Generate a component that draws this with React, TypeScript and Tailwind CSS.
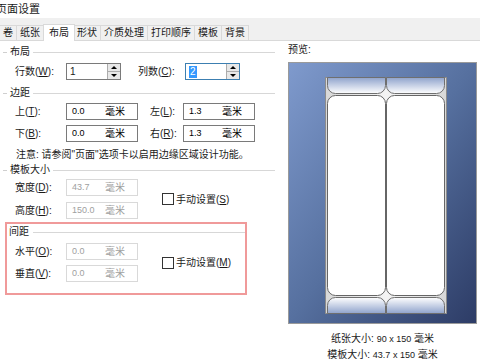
import React from "react";

const FONT = { fontFamily: '"Liberation Sans", "Noto Sans CJK SC", sans-serif' };

const tabs = ["卷", "纸张", "布局", "形状", "介质处理", "打印顺序", "模板", "背景"];

const GroupHeader: React.FC<{ title: string }> = ({ title }) => (
  <div className="flex items-center h-[14px]">
    <div className="ml-[3px] w-[4px] h-px bg-[#cfcfcf]" />
    <span className="px-[3px] leading-[14px]">{title}</span>
    <div className="flex-1 h-px bg-[#d7d7d7]" />
  </div>
);

const Label: React.FC<{ text: string; k: string; w: string }> = ({ text, k, w }) => (
  <div className={`${w} leading-[17px]`}>
    {text}(<u>{k}</u>):
  </div>
);

const UnitInput: React.FC<{ value: string; disabled?: boolean }> = ({ value, disabled }) => (
  <div
    className={`w-[72px] h-[17px] border bg-white flex items-center ${
      disabled ? "border-[#d9d9d9] text-[#a0a0a0]" : "border-[#7a7a7a] text-black"
    }`}
  >
    <span className="pl-[5px] w-[38px] text-[9px]">{value}</span>
    <span>毫米</span>
  </div>
);

const SpinInput: React.FC<{ value: string; focused?: boolean }> = ({ value, focused }) => (
  <div
    className={`w-[55px] h-[17px] border bg-white flex ${
      focused ? "border-[#3c7fb1]" : "border-[#7a7a7a]"
    }`}
  >
    <div className="flex-1 flex items-center pl-[3px] text-[10px]">
      {focused ? <span className="bg-[#3399ff] text-white px-px leading-[12px]">{value}</span> : value}
    </div>
    <div className="w-[13px] flex flex-col border-l border-[#acacac]">
      <div className="flex-1 bg-[#e8e8e8] border-b border-[#acacac] flex items-center justify-center">
        <div className="w-0 h-0 border-l-[3px] border-r-[3px] border-b-[3px] border-l-transparent border-r-transparent border-b-black" />
      </div>
      <div className="flex-1 bg-[#e8e8e8] flex items-center justify-center">
        <div className="w-0 h-0 border-l-[3px] border-r-[3px] border-t-[3px] border-l-transparent border-r-transparent border-t-black" />
      </div>
    </div>
  </div>
);

const Check: React.FC<{ text: string; k: string }> = ({ text, k }) => (
  <div className="flex items-center gap-[2px]">
    <div className="w-[12px] h-[12px] border border-[#333] bg-white" />
    <span>
      {text}(<u>{k}</u>)
    </span>
  </div>
);

const Preview: React.FC = () => (
  <div className="w-[189px] h-[262px] border border-[#9a9a9a] bg-gradient-to-br from-[#7f9acd] via-[#56709f] to-[#2d3c66]">
    <svg width="187" height="260" viewBox="0 0 187 260">
      <defs>
        <linearGradient id="topBand" x1="0" y1="0" x2="0" y2="1">
          <stop offset="0" stopColor="#8fa3cc" />
          <stop offset="1" stopColor="#ffffff" />
        </linearGradient>
        <linearGradient id="botBand" x1="0" y1="0" x2="0" y2="1">
          <stop offset="0" stopColor="#ffffff" />
          <stop offset="1" stopColor="#8fa3cc" />
        </linearGradient>
        <linearGradient id="paper" x1="0" y1="0" x2="1" y2="0">
          <stop offset="0" stopColor="#d8d8d8" />
          <stop offset="0.5" stopColor="#f4f4f4" />
          <stop offset="1" stopColor="#d8d8d8" />
        </linearGradient>
      </defs>
      <rect x="36.5" y="14.5" width="121" height="236" fill="url(#paper)" stroke="#8c8c8c" />
      <path d="M38.5 14.5 V22.5 a8 8 0 0 0 8 8 H88.5 a8 8 0 0 0 8 -8 V14.5 Z" fill="url(#topBand)" stroke="#6f6f6f" />
      <path d="M97.5 14.5 V22.5 a8 8 0 0 0 8 8 H147.5 a8 8 0 0 0 8 -8 V14.5 Z" fill="url(#topBand)" stroke="#6f6f6f" />
      <rect x="38.5" y="32.5" width="58" height="200" rx="8" fill="#ffffff" stroke="#666" />
      <rect x="97.5" y="32.5" width="58" height="200" rx="8" fill="#ffffff" stroke="#666" />
      <path d="M38.5 250.5 V242.5 a8 8 0 0 1 8 -8 H88.5 a8 8 0 0 1 8 8 V250.5 Z" fill="url(#botBand)" stroke="#6f6f6f" />
      <path d="M97.5 250.5 V242.5 a8 8 0 0 1 8 -8 H147.5 a8 8 0 0 1 8 8 V250.5 Z" fill="url(#botBand)" stroke="#6f6f6f" />
    </svg>
  </div>
);

export default function App() {
  return (
    <div className="w-[480px] h-[363px] bg-white overflow-hidden text-[10px] text-[#1a1a1a]" style={FONT}>
      {/* title */}
      <div className="h-[18px] flex items-center -ml-[4px] text-[11px]">页面设置</div>

      {/* tabs */}
      <div className="h-[23px] bg-[#f0f0f0] border-b border-[#d9d9d9] flex items-end">
        {tabs.map((t) => (
          <div
            key={t}
            className={
              t === "布局"
                ? "h-[17px] -mb-px px-[5px] -mx-[1px] bg-white border-x border-t border-[#d9d9d9] leading-[16px] relative"
                : "h-[15px] px-[3px] border-x border-t border-[#d9d9d9] -ml-px leading-[14px] bg-[#f0f0f0]"
            }
          >
            {t}
          </div>
        ))}
      </div>

      <div className="flex">
        {/* left */}
        <div className="w-[275px] flex flex-col">
          <div className="mt-[4px]">
            <GroupHeader title="布局" />
          </div>
          <div className="mt-[4px] flex items-center pl-[15px]">
            <Label text="行数" k="W" w="w-[51px]" />
            <SpinInput value="1" />
            <div className="ml-[17px]" />
            <Label text="列数" k="C" w="w-[47px]" />
            <SpinInput value="2" focused />
          </div>

          <div className="mt-[6px]">
            <GroupHeader title="边距" />
          </div>
          <div className="mt-[3px] flex items-center pl-[15px]">
            <Label text="上" k="T" w="w-[51px]" />
            <UnitInput value="0.0" />
            <div className="ml-[12px]" />
            <Label text="左" k="L" w="w-[33px]" />
            <UnitInput value="1.3" />
          </div>
          <div className="mt-[5px] flex items-center pl-[15px]">
            <Label text="下" k="B" w="w-[51px]" />
            <UnitInput value="0.0" />
            <div className="ml-[12px]" />
            <Label text="右" k="R" w="w-[33px]" />
            <UnitInput value="1.3" />
          </div>
          <div className="mt-[6px] h-[14px] leading-[14px] pl-[16px]">
            注意: 请参阅"页面"选项卡以启用边缘区域设计功能。
          </div>

          <div className="mt-[1px]">
            <GroupHeader title="模板大小" />
          </div>
          <div className="mt-[2px] flex items-center">
            <div className="flex flex-col gap-[6px] pl-[15px]">
              <div className="flex items-center">
                <Label text="宽度" k="D" w="w-[51px]" />
                <UnitInput value="43.7" disabled />
              </div>
              <div className="flex items-center">
                <Label text="高度" k="H" w="w-[51px]" />
                <UnitInput value="150.0" disabled />
              </div>
            </div>
            <div className="ml-[24px]">
              <Check text="手动设置" k="S" />
            </div>
          </div>

          <div className="mt-[3px] ml-[5px] w-[242px] border-2 border-[#f09a9a] pb-[11px]">
            <div className="mt-[1px] flex items-center h-[14px]">
              <span className="pl-[2px] pr-[4px] leading-[14px]">间距</span>
              <div className="flex-1 h-px bg-[#d7d7d7]" />
            </div>
            <div className="mt-[4px] flex items-center">
              <div className="flex flex-col gap-[5px] pl-[8px]">
                <div className="flex items-center">
                  <Label text="水平" k="O" w="w-[51px]" />
                  <UnitInput value="0.0" disabled />
                </div>
                <div className="flex items-center">
                  <Label text="垂直" k="V" w="w-[51px]" />
                  <UnitInput value="0.0" disabled />
                </div>
              </div>
              <div className="ml-[24px]">
                <Check text="手动设置" k="M" />
              </div>
            </div>
          </div>
        </div>

        {/* right */}
        <div className="ml-[13px] flex flex-col">
          <div className="mt-[2px] h-[14px] leading-[14px]">预览:</div>
          <div className="mt-[5px]">
            <Preview />
          </div>
          <div className="mt-[7px] w-[189px] text-center leading-[16px]">
            <div>
              纸张大小: <span className="text-[9px]">90 x 150</span> 毫米
            </div>
            <div>
              模板大小: <span className="text-[9px]">43.7 x 150</span> 毫米
            </div>
          </div>
        </div>
      </div>
    </div>
  );
}
